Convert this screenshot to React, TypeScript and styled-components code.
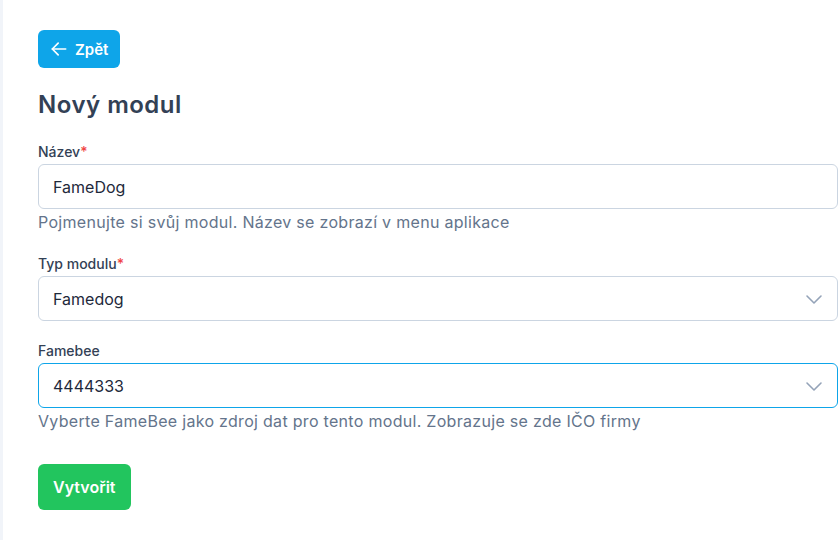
import styled, { createGlobalStyle } from "styled-components";

const GlobalStyle = createGlobalStyle`
  html, body {
    margin: 0;
    padding: 0;
    background: #fff;
  }
  body {
    font-family: Inter, "Noto Sans", "Liberation Sans", sans-serif;
    color: #334155;
  }
  * { box-sizing: border-box; }
`;

const Layout = styled.div`
  display: flex;
  min-height: 540px;
`;

const SideEdge = styled.div`
  width: 3px;
  flex-shrink: 0;
  background: #f1f4f9;
`;

const Main = styled.main`
  flex: 1;
  padding: 30px 0 0 35px;
  display: flex;
  flex-direction: column;
  align-items: flex-start;
`;

const Button = styled.button<{ $variant: "back" | "submit" }>`
  display: inline-flex;
  align-items: center;
  gap: 6px;
  border: none;
  border-radius: 6px;
  color: #fff;
  font-family: inherit;
  font-weight: 600;
  cursor: pointer;
  background: ${({ $variant }) => ($variant === "back" ? "#0ea5e9" : "#22c55e")};
  height: ${({ $variant }) => ($variant === "back" ? "38px" : "46px")};
  padding: ${({ $variant }) => ($variant === "back" ? "0 12px 0 11px" : "0 15px")};
  font-size: ${({ $variant }) => ($variant === "back" ? "15px" : "16px")};
`;

const Title = styled.h1`
  margin: 21px 0 0;
  font-size: 24px;
  line-height: 32px;
  font-weight: 600;
  letter-spacing: 0.5px;
  color: #334155;
`;

const Form = styled.form`
  width: 100%;
  margin-top: 21px;
  display: flex;
  flex-direction: column;
`;

const Field = styled.div<{ $gap?: number }>`
  display: flex;
  flex-direction: column;
  margin-bottom: ${({ $gap }) => $gap ?? 20}px;
`;

const Label = styled.label`
  font-size: 14px;
  line-height: 20px;
  font-weight: 500;
  color: #334155;
  margin-bottom: 2px;
`;

const Required = styled.span`
  color: #ef4444;
`;

const Control = styled.div<{ $focused?: boolean }>`
  height: 45px;
  border: 1px solid ${({ $focused }) => ($focused ? "#0ea5e9" : "#cbd5e1")};
  border-radius: 6px;
  display: flex;
  align-items: center;
  justify-content: space-between;
  padding: 0 13px 0 14px;
  font-size: 16px;
  color: #1e293b;
  background: #fff;
`;

const Hint = styled.p`
  margin: 1px 0 0;
  font-size: 16px;
  line-height: 24px;
  letter-spacing: 0.3px;
  color: #64748b;
`;

const Chevron = () => (
  <svg width="20" height="20" viewBox="0 0 20 20" fill="none" stroke="#94a3b8" strokeWidth="1.6" strokeLinecap="round" strokeLinejoin="round">
    <path d="M3 7l7 7 7-7" />
  </svg>
);

const ArrowLeft = () => (
  <svg width="20" height="20" viewBox="0 0 24 24" fill="none" stroke="#fff" strokeWidth="2" strokeLinecap="round" strokeLinejoin="round">
    <path d="M20 12H4" />
    <path d="m11 19-7-7 7-7" />
  </svg>
);

export default function App() {
  return (
    <>
      <GlobalStyle />
      <Layout>
        <SideEdge />
        <Main>
          <Button type="button" $variant="back">
            <ArrowLeft />
            Zpět
          </Button>
          <Title>Nový modul</Title>
          <Form onSubmit={(e) => e.preventDefault()}>
            <Field>
              <Label>
                Název<Required>*</Required>
              </Label>
              <Control>FameDog</Control>
              <Hint>Pojmenujte si svůj modul. Název se zobrazí v menu aplikace</Hint>
            </Field>
            <Field>
              <Label>
                Typ modulu<Required>*</Required>
              </Label>
              <Control>
                Famedog
                <Chevron />
              </Control>
            </Field>
            <Field $gap={31}>
              <Label>Famebee</Label>
              <Control $focused>
                4444333
                <Chevron />
              </Control>
              <Hint>Vyberte FameBee jako zdroj dat pro tento modul. Zobrazuje se zde IČO firmy</Hint>
            </Field>
            <div>
              <Button type="submit" $variant="submit">Vytvořit</Button>
            </div>
          </Form>
        </Main>
      </Layout>
    </>
  );
}
